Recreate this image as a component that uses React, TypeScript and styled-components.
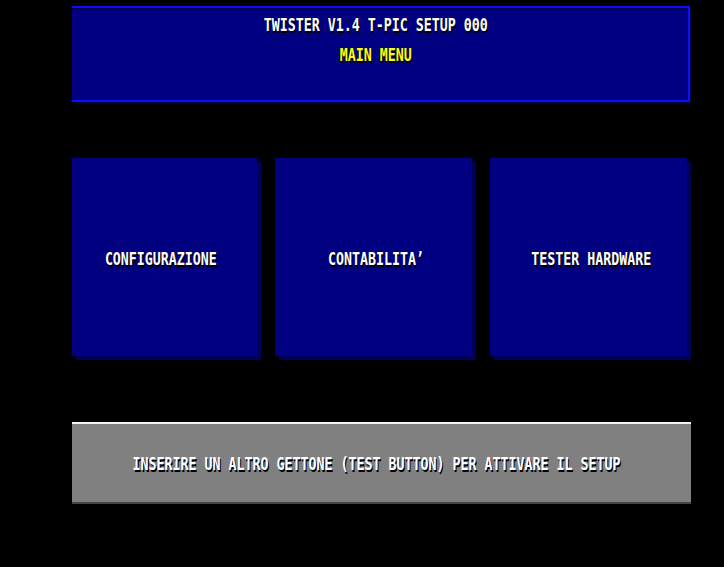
import React from "react";
import styled, { createGlobalStyle } from "styled-components";

const Global = createGlobalStyle`
  html, body {
    margin: 0;
    padding: 0;
    background: #000000;
  }
  body {
    width: 724px;
    height: 567px;
    overflow: hidden;
  }
`;

const Page = styled.main`
  display: flex;
  flex-direction: column;
  align-items: flex-start;
  padding: 6px 0 0 72px;
  width: 724px;
  height: 567px;
  box-sizing: border-box;
  background: #000000;
`;

const Header = styled.header`
  width: 618px;
  height: 96px;
  box-sizing: border-box;
  background: #000080;
  border-top: 2px solid #0c0cff;
  border-right: 2px solid #0c0cff;
  border-bottom: 2px solid #0c0cff;
  box-shadow: 2px 2px 0 #00003c, inset 0 2px 0 #000050;
  display: flex;
  flex-direction: column;
  align-items: center;
  padding: 7px 8px 0 0;
  gap: 10px;
`;

const Label = styled.span<{ $color?: string }>`
  display: inline-block;
  font-family: "DejaVu Sans Mono", "Liberation Mono", monospace;
  font-weight: bold;
  font-size: 18px;
  line-height: 20px;
  white-space: pre;
  color: ${(p) => p.$color || "#ffffff"};
  transform: scaleX(0.738);
  transform-origin: center;
  text-shadow: 1.4px 2px 0 #000000;
`;

const Tiles = styled.nav`
  display: grid;
  grid-template-columns: 185px 197px 197px;
  column-gap: 18px;
  margin-top: 56px;
`;

const Tile = styled.div<{ $shift: number }>`
  height: 198px;
  background: #000080;
  box-shadow: 4px 4px 0 #000058;
  display: flex;
  align-items: center;
  justify-content: center;
  padding-top: 4px;
  padding-left: ${(p) => (p.$shift > 0 ? p.$shift * 2 : 0)}px;
  padding-right: ${(p) => (p.$shift < 0 ? -p.$shift * 2 : 0)}px;
  box-sizing: border-box;
`;

const Notice = styled.footer`
  margin-top: 66px;
  width: 619px;
  height: 82px;
  box-sizing: border-box;
  background: #808080;
  border-top: 2px solid #f4f4f4;
  border-bottom: 2px solid #454545;
  display: flex;
  justify-content: center;
  align-items: flex-start;
  padding: 30px 10px 0 0;
`;

export default function App() {
  return (
    <>
      <Global />
      <Page>
        <Header>
          <Label>TWISTER V1.4 T-PIC SETUP 000</Label>
          <Label $color="#ffff00">MAIN MENU</Label>
        </Header>
        <Tiles>
          <Tile $shift={-4}>
            <Label>CONFIGURAZIONE</Label>
          </Tile>
          <Tile $shift={3}>
            <Label>CONTABILITA’</Label>
          </Tile>
          <Tile $shift={3}>
            <Label>TESTER HARDWARE</Label>
          </Tile>
        </Tiles>
        <Notice>
          <Label>INSERIRE UN ALTRO GETTONE (TEST BUTTON) PER ATTIVARE IL SETUP</Label>
        </Notice>
      </Page>
    </>
  );
}
